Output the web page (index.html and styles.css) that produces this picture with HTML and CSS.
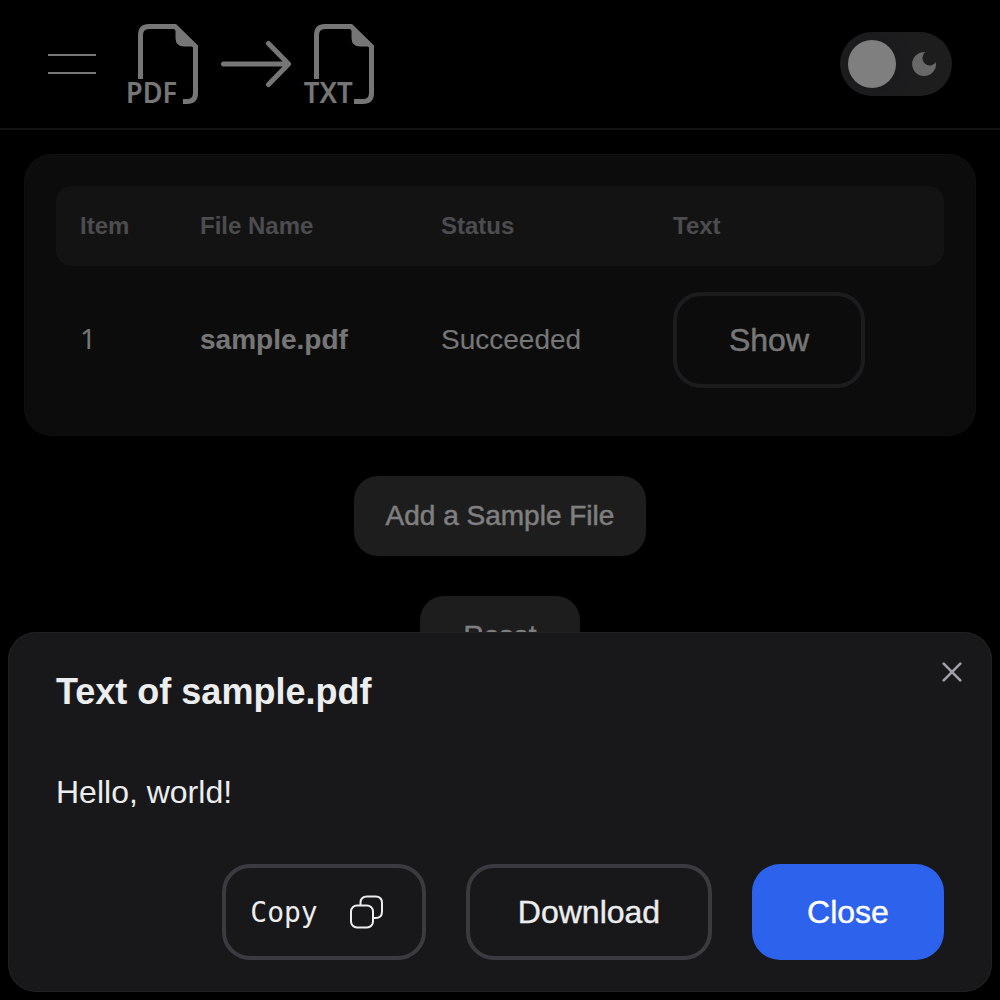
FILE: index.html
```html
<!DOCTYPE html>
<html lang="en">
<head>
<meta charset="utf-8">
<title>PDF to TXT</title>
<link rel="stylesheet" href="styles.css">
</head>
<body>
<header class="navbar">
  <button class="menu" aria-label="Menu"><span></span><span></span></button>
  <svg class="logo" width="256" height="96" viewBox="124 16 256 96" fill="none" stroke="#ecedee" stroke-width="5">
    <path d="M140.500 79V35q0-8.500 8.500-8.500H175L195.500 46.500V93q0 8.500-8.500 8.500H183"/>
    <path d="M175.500 24.500V38q0 8.500 8.500 8.500H198z" fill="#ecedee" stroke="none"/>
    <path d="M223.500 64H288M268.500 43.500L288.500 64L268.500 84.500" stroke-linecap="round" stroke-linejoin="round"/>
    <path d="M316.500 79V35q0-8.500 8.500-8.500H351L371.500 46.500V93q0 8.500-8.500 8.500H354"/>
    <path d="M351.500 24.500V38q0 8.500 8.500 8.500H374z" fill="#ecedee" stroke="none"/>
    <text class="logo-text" x="126" y="103.300" textLength="51" lengthAdjust="spacingAndGlyphs">PDF</text>
    <text class="logo-text" x="303.700" y="103.300" textLength="49" lengthAdjust="spacingAndGlyphs">TXT</text>
  </svg>
  <div class="switch">
    <span class="thumb"></span>
    <svg width="26" height="26" viewBox="0 0 26 26"><path d="M14.200 1.100A12 12 0 1 0 25 11.300A7.500 7.500 0 1 1 14.200 1.100z" fill="#d0d0d2"/></svg>
  </div>
</header>
<main class="content">
  <section class="card">
    <div class="row head"><span>Item</span><span>File Name</span><span>Status</span><span>Text</span></div>
    <div class="row body"><span class="num">1</span><strong>sample.pdf</strong><span>Succeeded</span><button class="btn outline">Show</button></div>
  </section>
  <button class="btn flat">Add a Sample File</button>
  <button class="btn flat reset">Reset</button>
</main>
<div class="backdrop">
  <section class="modal">
    <svg class="dismiss" width="20" height="20" viewBox="0 0 20 20" stroke="#a1a1aa" stroke-width="2.600" stroke-linecap="round"><path d="M1.700 1.700l16.600 16.600M18.300 1.700l-16.600 16.600"/></svg>
    <h2>Text of sample.pdf</h2>
    <p>Hello, world!</p>
    <footer>
      <button class="btn outline copy"><span>Copy</span>
        <svg width="34" height="34" viewBox="0 0 34 34" fill="none" stroke="#ecedee" stroke-width="2"><rect x="1" y="10.500" width="22" height="22" rx="6"/><path d="M10.500 10.500V8q0-6.500 6.500-6.500h8.500q6.500 0 6.500 6.500V16.500q0 6.500-6.500 6.500H23"/></svg>
      </button>
      <button class="btn outline download">Download</button>
      <button class="btn primary">Close</button>
    </footer>
  </section>
</div>
</body>
</html>
```
FILE: styles.css
```css
* { box-sizing: border-box; }
body {
  margin: 0;
  height: 1000px;
  overflow: hidden;
  background: #000;
  color: #ecedee;
  font-family: "Liberation Sans", Arial, sans-serif;
}
button { font: inherit; color: inherit; background: none; border: 0; padding: 0; }
.navbar {
  height: 130px;
  padding: 0 48px;
  border-bottom: 2px solid #262626;
  display: flex;
  align-items: center;
}
.menu { width: 48px; display: flex; flex-direction: column; gap: 16px; }
.menu span { height: 2px; background: #ecedee; }
.logo { margin-left: 28px; }
.logo-text {
  font: 600 28px "Noto Sans", "Open Sans", sans-serif;
  fill: #ecedee;
  stroke: none;
}
.switch {
  margin-left: auto;
  width: 112px;
  height: 64px;
  padding: 0 15px 0 8px;
  border-radius: 32px;
  background: #3a3a3d;
  display: flex;
  align-items: center;
  justify-content: space-between;
}
.thumb { width: 48px; height: 48px; border-radius: 50%; background: #fff; box-shadow: 0 0 20px rgba(20, 20, 40, .2); }
.content {
  padding: 24px;
  display: flex;
  flex-direction: column;
  align-items: center;
  gap: 40px;
}
.card {
  width: 100%;
  height: 282px;
  padding: 32px;
  border-radius: 28px;
  background: #181818;
  box-shadow: inset 0 0 0 1px #1e1e1e;
}
.row {
  display: grid;
  grid-template-columns: 120px 241px 232px 1fr;
  align-items: center;
  padding: 0 24px;
}
.head {
  height: 80px;
  border-radius: 16px;
  background: #262626;
  color: #98989f;
  font-size: 24px;
  font-weight: 700;
}
.body { height: 148px; font-size: 28px; }
.num { font-family: "Noto Sans", sans-serif; padding-bottom: 4px; }
.btn {
  height: 96px;
  width: 192px;
  border-radius: 28px;
  font-size: 32px;
  -webkit-text-stroke: .4px currentColor;
  display: flex;
  align-items: center;
  justify-content: center;
}
.outline { border: 4px solid #3a3a41; }
.body .outline { border-color: #38383c; }
.flat { width: 292px; height: 80px; border-radius: 24px; background: #3a3a3d; font-size: 28px; color: #fff; }
.reset { width: 160px; }
.backdrop {
  position: absolute;
  inset: 0;
  padding: 8px;
  background: rgba(0, 0, 0, .5);
  display: flex;
  align-items: flex-end;
}
.modal {
  position: relative;
  width: 100%;
  height: 360px;
  padding: 32px 48px;
  border-radius: 28px;
  background: #18181a;
  box-shadow: inset 0 0 1px 1px #222224;
  display: flex;
  flex-direction: column;
}
.dismiss { position: absolute; top: 30px; right: 30px; }
h2 { margin: 0; font-size: 36px; line-height: 56px; }
p { margin: 48px 0 0; font-size: 32px; line-height: 48px; }
footer { margin-top: auto; display: flex; justify-content: flex-end; gap: 40px; }
.copy {
  width: 204px;
  gap: 32px;
  padding-right: 14px;
  font: 28px "DejaVu Sans Mono", monospace;
  -webkit-text-stroke: 0;
}
.download { width: 246px; }
.primary { background: #2d62ec; color: #fff; }
```
